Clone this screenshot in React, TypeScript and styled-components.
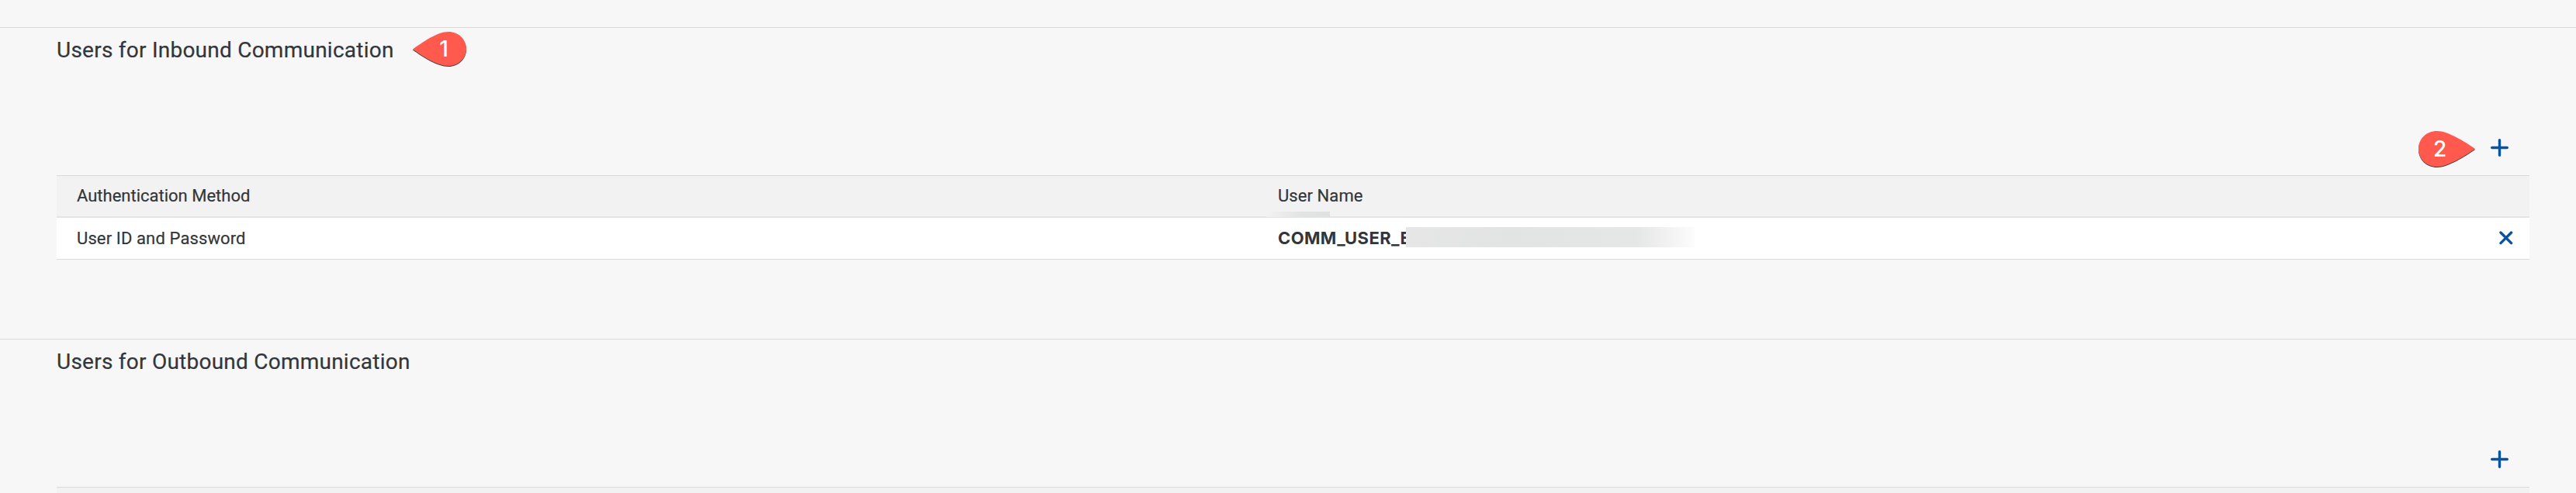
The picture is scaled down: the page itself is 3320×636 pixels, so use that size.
import React from "react";
import styled, { createGlobalStyle } from "styled-components";

const GlobalStyle = createGlobalStyle`
  * { box-sizing: border-box; }
  body { margin: 0; background: #f7f7f7; color: #32363a; font-family: Roboto, "Liberation Sans", sans-serif; }
`;

const Page = styled.main`
  width: 3320px;
  height: 636px;
  padding-top: 35px;
  overflow: hidden;
  background: #f7f7f7;
`;

const Section = styled.section`
  height: 402px;
  padding: 0 60px 0 73px;
  border-top: 1px solid #d9d9d9;
`;

const TitleBar = styled.header`
  display: flex;
  align-items: flex-start;
  height: 118px;
`;

const Title = styled.h2`
  margin: 0;
  padding-top: 13px;
  font-size: 28px;
  font-weight: 400;
  line-height: 32px;
  letter-spacing: 0.24px;
  -webkit-text-stroke: 0.2px currentColor;
  white-space: nowrap;
`;

const Toolbar = styled.div`
  display: flex;
  justify-content: flex-end;
  gap: 20px;
  height: 72px;
  padding-right: 27px;
`;

const IconButton = styled.button`
  display: flex;
  margin: 0 0 1px;
  padding: 0;
  border: 0;
  background: none;
  color: #0854a0;
`;

const AddButton = styled(IconButton)`
  align-self: flex-start;
  margin-top: 25px;
`;

const Table = styled.div`
  border-top: 1px solid #d9d9d9;
`;

const Row = styled.div<{ $head?: boolean }>`
  display: grid;
  grid-template-columns: 1548px 1fr auto;
  align-items: center;
  height: 54px;
  padding: 0 21px 0 26px;
  background: ${(p) => (p.$head ? "#f2f2f2" : "#fff")};
  border-bottom: ${(p) => (p.$head ? "2px solid #e4e4e4" : "1px solid #d9d9d9")};
`;

const Cell = styled.div<{ $spacing?: number }>`
  position: relative;
  display: flex;
  align-items: center;
  height: 26px;
  font-size: 22px;
  line-height: 26px;
  letter-spacing: ${(p) => p.$spacing || 0}px;
  -webkit-text-stroke: 0.2px currentColor;
  white-space: nowrap;
`;

const UserId = styled.span`
  margin-top: -1px;
  font-family: Inter, sans-serif;
  font-weight: 700;
  letter-spacing: 0.38px;
  -webkit-text-stroke: 0;
`;

const Redaction = styled.span`
  position: absolute;
  left: 165px;
  top: -1.5px;
  width: 372px;
  height: 26px;
  background: linear-gradient(90deg, #e6e6e6 0%, #e2e3e3 35%, #e5e6e6 80%, #f1f1f1 90%, #fcfcfc 100%);
`;

const Smudge = styled.span`
  position: absolute;
  left: -15px;
  top: 33px;
  width: 82px;
  height: 7px;
  background: linear-gradient(90deg, #f2f2f2, #e2e3e3 55%, #dfe0e0);
`;

const Marker = styled.svg<{ $top: number; $left?: number }>`
  flex: none;
  display: block;
  overflow: visible;
  margin: ${(p) => p.$top}px 0 0 ${(p) => p.$left || 0}px;
`;

const MarkerShape = styled.path`
  fill: #ff5a4d;
  filter: drop-shadow(0 1px 0.7px rgba(0, 0, 0, 0.75));
`;

const MarkerText = styled.text`
  fill: #fff;
  font: 500 28px Inter, sans-serif;
  text-anchor: middle;
`;

function Plus() {
  return (
    <AddButton aria-label="Add">
      <svg width="23" height="23" viewBox="0 0 23 23" stroke="currentColor" strokeWidth="3.4" strokeLinecap="round">
        <path d="M11.5 1.7V21.3M1.7 11.5H21.3" />
      </svg>
    </AddButton>
  );
}

function Remove() {
  return (
    <IconButton aria-label="Remove">
      <svg width="18" height="18" viewBox="0 0 18 18" stroke="currentColor" strokeWidth="3.4" strokeLinecap="round">
        <path d="M2 2L15.6 15.6M15.6 2L2 15.6" />
      </svg>
    </IconButton>
  );
}

export default function App() {
  return (
    <Page>
      <GlobalStyle />
      <Section>
        <TitleBar>
          <Title>Users for Inbound Communication</Title>
          <Marker $top={5} $left={24.6} width="69" height="44" viewBox="0 0 69 44">
            <MarkerShape d="M0 22.5C12 14 31 0 46 0C59 0 69 10 69 22C69 34 59 44 46 44C31 44 12 31 0 22.5Z" />
            <MarkerText x="40" y="32">1</MarkerText>
          </Marker>
        </TitleBar>
        <Toolbar>
          <Marker $top={15} width="73" height="46" viewBox="0 0 73 46">
            <MarkerShape d="M73 23C60 14 38 0 24 0C10 0 0 10 0 23C0 36 10 46 24 46C38 46 60 32 73 23Z" />
            <MarkerText x="27.7" y="33">2</MarkerText>
          </Marker>
          <Plus />
        </Toolbar>
        <Table>
          <Row $head>
            <Cell>Authentication Method</Cell>
            <Cell $spacing={0.08}>User Name<Smudge /></Cell>
          </Row>
          <Row>
            <Cell $spacing={0.12}>User ID and Password</Cell>
            <Cell><UserId>COMM_USER_E</UserId><Redaction /></Cell>
            <Remove />
          </Row>
        </Table>
      </Section>
      <Section>
        <TitleBar>
          <Title>Users for Outbound Communication</Title>
        </TitleBar>
        <Toolbar><Plus /></Toolbar>
        <Table><Row $head /></Table>
      </Section>
    </Page>
  );
}
